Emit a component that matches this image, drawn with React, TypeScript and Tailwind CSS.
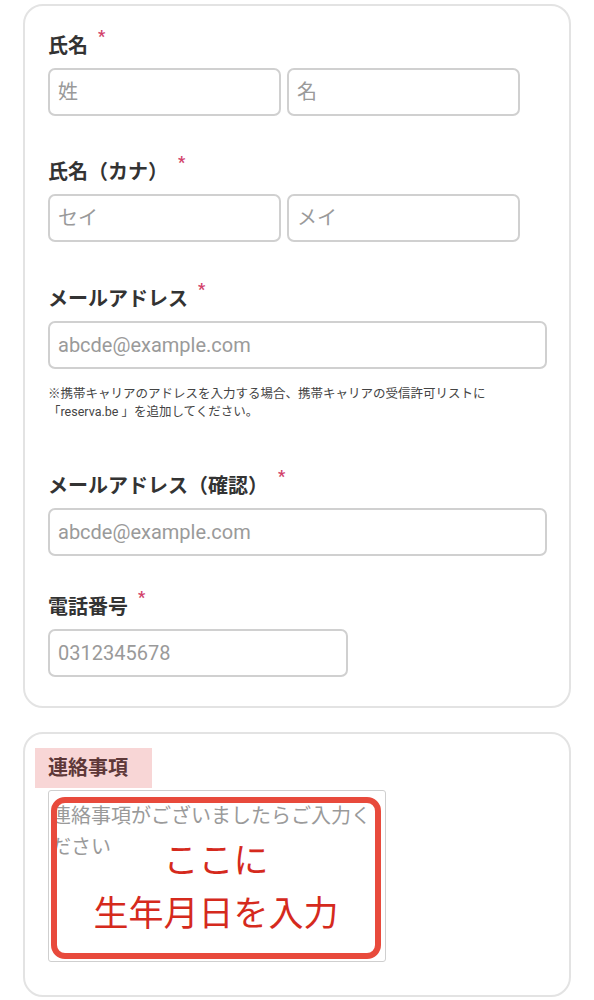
import React from "react";

const font = { fontFamily: 'Roboto, "Noto Sans CJK JP", sans-serif' };

const Label: React.FC<{ text: string; required?: boolean }> = ({ text, required }) => (
  <div className="flex items-start h-[28px] text-[20px] leading-[28px] font-bold text-[#333]">
    <span>{text}</span>
    {required && <span className="ml-[10px] -mt-[5px] text-[16px] leading-[20px] font-bold text-[#d2436a]">*</span>}
  </div>
);

const Field: React.FC<{ placeholder: string; className?: string }> = ({ placeholder, className }) => (
  <input
    placeholder={placeholder}
    className={
      "h-[48px] rounded-[7px] border-[2px] border-[#d0d0d0] bg-white px-[8px] text-[20px] text-[#333] placeholder:text-[#9a9a9a] outline-none " +
      (className ?? "")
    }
  />
);

export default function App() {
  return (
    <div className="min-h-[1000px] bg-white pt-[4px]" style={font}>
      <div className="ml-[23px] w-[548px] rounded-[20px] border-[2px] border-[#e3e3e3] px-[23px] pt-[26px] pb-[29px]">
        <Label text="氏名" required />
        <div className="mt-[8px] flex gap-[6px]">
          <Field placeholder="姓" className="w-[233px]" />
          <Field placeholder="名" className="w-[233px]" />
        </div>

        <div className="mt-[42px]">
          <Label text="氏名（カナ）" required />
        </div>
        <div className="mt-[8px] flex gap-[6px]">
          <Field placeholder="セイ" className="w-[233px]" />
          <Field placeholder="メイ" className="w-[233px]" />
        </div>

        <div className="mt-[43px]">
          <Label text="メールアドレス" required />
        </div>
        <Field placeholder="abcde@example.com" className="mt-[8px] w-[499px]" />
        <p className="mt-[16px] text-[12.5px] leading-[18px] text-[#444]">
          ※携帯キャリアのアドレスを入力する場合、携帯キャリアの受信許可リストに
          <br />
          「reserva.be 」を追加してください。
        </p>

        <div className="mt-[51px]">
          <Label text="メールアドレス（確認）" required />
        </div>
        <Field placeholder="abcde@example.com" className="mt-[8px] w-[499px]" />

        <div className="mt-[37px]">
          <Label text="電話番号" required />
        </div>
        <Field placeholder="0312345678" className="mt-[8px] w-[300px]" />
      </div>

      <div className="ml-[23px] mt-[24px] w-[548px] rounded-[20px] border-[2px] border-[#e3e3e3] pl-[23px] pr-[23px] pt-[14px] pb-[33px]">
        <div className="-ml-[13px] inline-flex h-[40px] items-center bg-[#f8d6d6] pl-[13px] pr-[24px] text-[20px] font-bold text-[#5e3838]">
          連絡事項
        </div>
        <div className="relative mt-[2px] h-[172px] w-[338px]">
          <textarea
            placeholder="連絡事項がございましたらご入力ください"
            className="h-full w-full resize-none rounded-[3px] border-[1.5px] border-[#cfcfcf] bg-white px-[2px] pt-[10px] text-[20px] leading-[31px] text-[#333] placeholder:text-[#9a9a9a] outline-none"
          />
          <div className="absolute left-[3px] top-[7px] flex h-[162px] w-[330px] flex-col items-center justify-center rounded-[14px] border-[6px] border-[#e84a3c] pt-[20px] text-[35px] leading-[53px] text-[#d52a1d]">
            <span>ここに</span>
            <span>生年月日を入力</span>
          </div>
        </div>
      </div>
    </div>
  );
}
